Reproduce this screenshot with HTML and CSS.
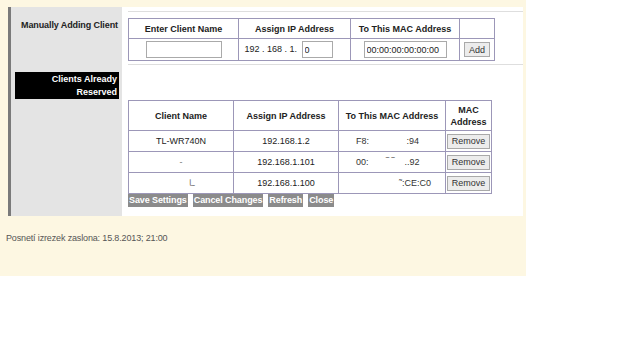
FILE: index.html
```html
<!DOCTYPE html>
<html lang="en">
<head>
    <meta charset="UTF-8">
    <title>Address Reservation</title>
    <link rel="stylesheet" href="styles.css">
</head>
<body>
    <div class="page">
        <div class="frame">
            <div class="side">
                <div class="side-title">Manually Adding Client</div>
                <div class="side-black">Clients Already<br>Reserved</div>
            </div>
            <div class="main">
                <div class="rule"></div>
                <table class="grid add-table">
                    <tr class="head">
                        <th class="c1">Enter Client Name</th>
                        <th class="c2">Assign IP Address</th>
                        <th class="c3">To This MAC Address</th>
                        <th class="c4"></th>
                    </tr>
                    <tr class="entry">
                        <td><input class="field name-field" type="text"></td>
                        <td class="ip-cell">192 . 168 . 1. <input class="field ip-field" type="text" value="0"></td>
                        <td><input class="field mac-field" type="text" value="00:00:00:00:00:00"></td>
                        <td><button class="small-btn">Add</button></td>
                    </tr>
                </table>
                <div class="rule rule-low"></div>
                <table class="grid list-table">
                    <tr class="head">
                        <th class="d1">Client Name</th>
                        <th class="d2">Assign IP Address</th>
                        <th class="d3">To This MAC Address</th>
                        <th class="d4">MAC<br>Address</th>
                    </tr>
                    <tr>
                        <td>TL-WR740N</td>
                        <td>192.168.1.2</td>
                        <td class="mac">F8:               :94</td>
                        <td><button class="small-btn">Remove</button></td>
                    </tr>
                    <tr>
                        <td class="blur">-</td>
                        <td>192.168.1.101</td>
                        <td class="mac">00:       ‾ ‾    ..92</td>
                        <td><button class="small-btn">Remove</button></td>
                    </tr>
                    <tr>
                        <td class="blur shift">ـا</td>
                        <td>192.168.1.100</td>
                        <td class="mac mac-end">˜:CE:C0</td>
                        <td><button class="small-btn">Remove</button></td>
                    </tr>
                </table>
                <div class="actions">
                    <span class="act">Save Settings</span>
                    <span class="act">Cancel Changes</span>
                    <span class="act">Refresh</span>
                    <span class="act">Close</span>
                </div>
            </div>
        </div>
        <div class="footer">Posnetí izrezek zaslona: 15.8.2013; 21:00</div>
    </div>
</body>
</html>
```

FILE: styles.css
```css
body {
    margin: 0;
    background: #fff;
    font-family: 'Liberation Sans', Arial, sans-serif;
    font-size: 9px;
    color: #222;
}
.page {
    width: 526px;
    height: 276px;
    background: #fdf7e2;
    padding-top: 7px;
    box-sizing: border-box;
}
.frame {
    display: flex;
    margin-left: 8px;
    width: 512px;
    height: 209px;
    border-left: 3px solid #7a7a7a;
}
.side {
    width: 111px;
    background: #e4e4e4;
    padding-top: 13px;
    box-sizing: border-box;
}
.side-title {
    font-weight: bold;
    color: #222;
    padding-left: 10px;
    line-height: 11px;
    letter-spacing: -0.1px;
}
.side-black {
    margin: 41px 3px 0 4px;
    height: 27px;
    background: #000;
    color: #fff;
    font-weight: bold;
    text-align: right;
    line-height: 13px;
    padding: 1px 2px 0 0;
    box-sizing: border-box;
}
.main {
    flex: 1;
    background: #fff;
    padding: 4px 0 0 6px;
}
.rule {
    height: 1px;
    background: #dedede;
    margin-bottom: 6px;
}
.rule-low {
    margin: 3px 0 35px;
}
.grid {
    border-collapse: collapse;
    border: 1px solid #9c97b8;
}
.grid th, .grid td {
    border: 1px solid #9c97b8;
    text-align: center;
    padding: 0;
    font-size: 9px;
}
.grid th {
    font-weight: bold;
    color: #222;
}
.add-table .head { height: 20px; }
.add-table .entry { height: 22px; }
.c1 { width: 109px; }
.c2 { width: 111px; }
.c3 { width: 108px; }
.c4 { width: 34px; }
.field {
    font-family: 'Liberation Sans', Arial, sans-serif;
    font-size: 9px;
    height: 17px;
    border: 1px solid #aaa;
    padding: 0 2px;
    box-sizing: border-box;
    vertical-align: middle;
    color: #222;
}
.name-field { width: 76px; }
.ip-cell { text-align: right; padding-right: 12px !important; }
.ip-field { width: 31px; margin-left: 2px; }
.mac-field { width: 83px; }
.small-btn {
    font-family: 'Liberation Sans', Arial, sans-serif;
    font-size: 9px;
    color: #333;
    background: #ececec;
    border: 1px solid #a9a9a9;
    padding: 0 4px;
    height: 15px;
    vertical-align: middle;
}
.list-table .head { height: 30px; }
.list-table tr { height: 21px; }
.d1 { width: 104px; }
.d2 { width: 104px; }
.d3 { width: 106px; }
.d4 { width: 45px; line-height: 12px; }
.mac {
    white-space: pre;
    color: #333;
    text-align: left !important;
    padding-left: 17px !important;
}
.mac-end { text-align: right !important; padding-right: 14px !important; }
.blur { color: #777; }
.shift { padding-left: 22px !important; }
.actions {
    display: flex;
    gap: 5px;
    height: 13px;
}
.act {
    background: #8b8b8b;
    color: #fff;
    font-weight: bold;
    line-height: 13px;
    padding: 0 1px;
    letter-spacing: -0.1px;
}
.footer {
    margin: 17px 0 0 6px;
    color: #555;
    font-size: 9px;
    letter-spacing: -0.15px;
}
```
